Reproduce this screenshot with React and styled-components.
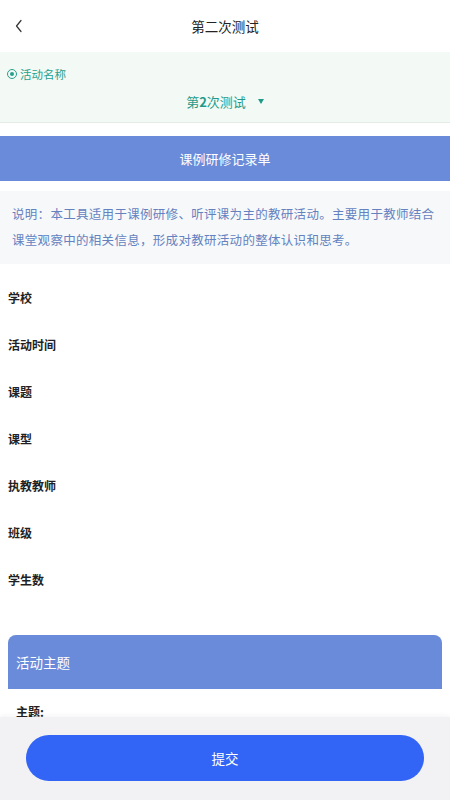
import styled, { createGlobalStyle } from 'styled-components';

const GlobalStyle = createGlobalStyle`
  html, body {
    margin: 0;
    padding: 0;
    background: #ffffff;
    font-family: "Noto Sans CJK SC", "Noto Sans", sans-serif;
  }
  * { box-sizing: border-box; }
`;

// Full-height page: scrolling area + footer
const Page = styled.div`
  height: 100vh;
  display: flex;
  flex-direction: column;
  overflow: hidden;
`;

const Scroll = styled.div`
  flex: 1;
  overflow: hidden;
`;

// Top navigation bar
const NavBar = styled.div`
  height: 52px;
  display: grid;
  grid-template-columns: 40px 1fr 40px;
  align-items: center;
`;

const BackBtn = styled.div`
  display: flex;
  align-items: center;
  padding-left: 14px;
  color: #333;
`;

const Title = styled.div`
  text-align: center;
  font-size: 13.5px;
  color: #222;
`;

// Green activity selector
const ActivityBox = styled.div`
  background: #f3faf6;
  height: 71px;
  padding: 14px 7px 0;
  border-bottom: 1px solid #e6ebe8;
`;

const ActivityLabel = styled.div`
  display: flex;
  align-items: center;
  gap: 3px;
  font-size: 11.5px;
  color: #26a08c;
`;

const Radio = styled.span`
  width: 10px;
  height: 10px;
  border: 1.3px solid #26a08c;
  border-radius: 50%;
  display: flex;
  align-items: center;
  justify-content: center;
  &::after {
    content: '';
    width: 4.5px;
    height: 4.5px;
    border-radius: 50%;
    background: #26a08c;
  }
`;

const ActivityValue = styled.div`
  margin-top: 10px;
  display: flex;
  justify-content: center;
  align-items: center;
  gap: 12px;
  font-size: 13px;
  color: #1f9a88;
  b { font-weight: 700; }
`;

const Caret = styled.span`
  width: 0;
  height: 0;
  border-left: 3.5px solid transparent;
  border-right: 3.5px solid transparent;
  border-top: 5px solid #1f9a88;
`;

// Blue heading bar
const SheetBar = styled.div`
  margin-top: 13px;
  height: 45px;
  background: #6a8bd9;
  color: #fff;
  font-size: 13px;
  display: flex;
  align-items: center;
  justify-content: center;
`;

const Desc = styled.div`
  margin-top: 10px;
  background: #f7f8fa;
  padding: 10px 4px 11px 12px;
  font-size: 12.5px;
  line-height: 26px;
  letter-spacing: 0.3px;
  color: #6482c0;
`;

const Fields = styled.div`
  margin-top: 10px;
`;

const FieldRow = styled.div`
  height: 47px;
  display: flex;
  align-items: center;
  padding-left: 8px;
  font-size: 12px;
  font-weight: 700;
  color: #1f1f24;
`;

// Card section
const Card = styled.div`
  margin: 32px 8px 0;
  border-radius: 8px 8px 0 0;
  overflow: hidden;
`;

const CardHead = styled.div`
  height: 54px;
  background: #6a8bd9;
  color: #fff;
  font-size: 13.5px;
  display: flex;
  align-items: center;
  padding-left: 8px;
`;

const CardRow = styled.div`
  padding: 14px 8px 0;
  font-size: 12px;
  font-weight: 700;
  color: #1f1f24;
`;

// Bottom action bar
const Footer = styled.div`
  height: 83px;
  flex-shrink: 0;
  background: #f2f2f4;
  box-shadow: 0 -2px 4px rgba(0, 0, 0, 0.04);
  padding: 18px 26px 0;
`;

const Submit = styled.button`
  width: 100%;
  height: 46px;
  border: none;
  border-radius: 23px;
  background: #3264f6;
  color: #fff;
  font-size: 13.5px;
  font-family: inherit;
`;

const fields = ['学校', '活动时间', '课题', '课型', '执教教师', '班级', '学生数'];

export default function App() {
  return (
    <Page>
      <GlobalStyle />
      <Scroll>
        <NavBar>
          <BackBtn>
            <svg width="10" height="14" viewBox="0 0 10 14" fill="none">
              <path d="M7 1.5L2.5 7L7 12.5" stroke="#333" strokeWidth="1.2" strokeLinecap="round" strokeLinejoin="round" />
            </svg>
          </BackBtn>
          <Title>第二次测试</Title>
          <div />
        </NavBar>

        <ActivityBox>
          <ActivityLabel>
            <Radio />
            活动名称
          </ActivityLabel>
          <ActivityValue>
            <span>第<b>2</b>次测试</span>
            <Caret />
          </ActivityValue>
        </ActivityBox>

        <SheetBar>课例研修记录单</SheetBar>

        <Desc>
          说明：本工具适用于课例研修、听评课为主的教研活动。主要用于教师结合课堂观察中的相关信息，形成对教研活动的整体认识和思考。
        </Desc>

        <Fields>
          {fields.map(f => (
            <FieldRow key={f}>{f}</FieldRow>
          ))}
        </Fields>

        <Card>
          <CardHead>活动主题</CardHead>
          <CardRow>主题:</CardRow>
        </Card>
      </Scroll>

      <Footer>
        <Submit>提交</Submit>
      </Footer>
    </Page>
  );
}
